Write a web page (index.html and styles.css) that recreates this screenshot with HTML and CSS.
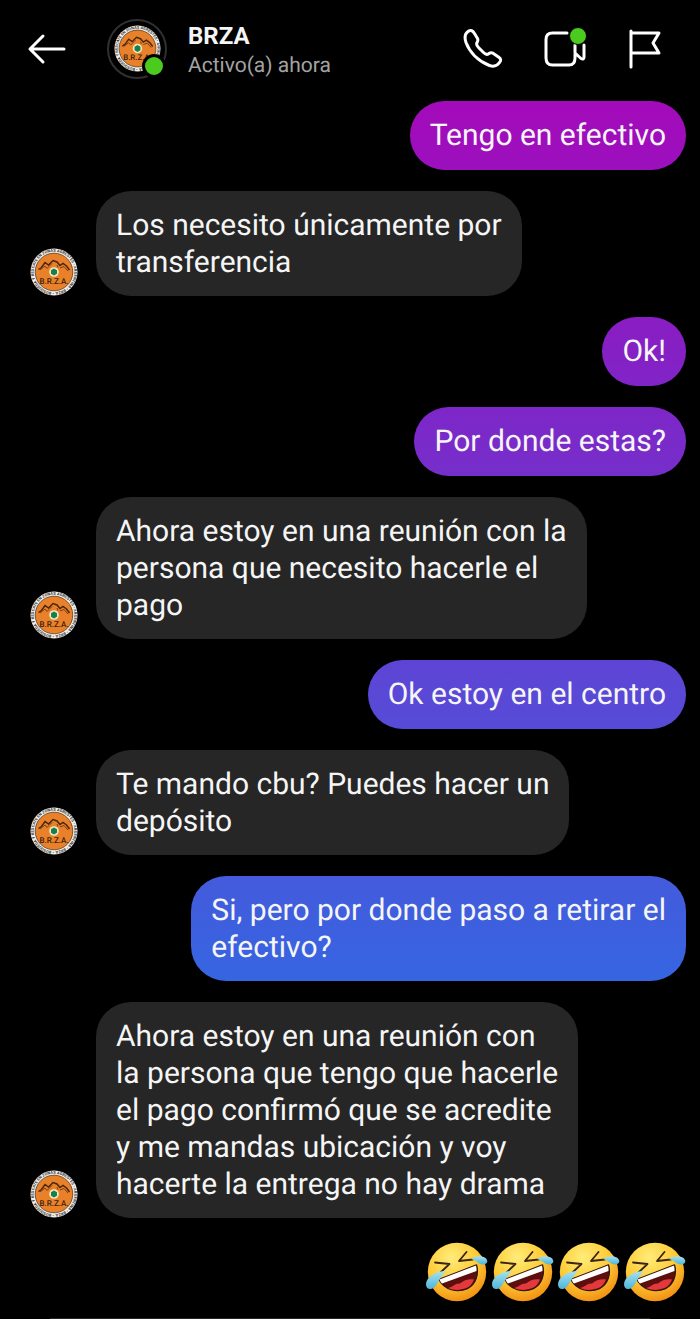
FILE: index.html
```html
<!DOCTYPE html>
<html lang="es">
  <head>
    <meta charset="UTF-8" />
    <meta name="viewport" content="width=device-width, initial-scale=1.0" />
    <title>BRZA | Chat</title>
    <link rel="stylesheet" href="styles.css" />
  </head>

  <body>
    <!-- shared drawings -->
    <svg class="defs" aria-hidden="true">
      <defs>
        <radialGradient id="face" cx="0.4" cy="0.25" r="0.8">
          <stop offset="0" stop-color="#ffec7a" />
          <stop offset="0.55" stop-color="#fecb35" />
          <stop offset="1" stop-color="#f08a10" />
        </radialGradient>
        <linearGradient id="tear" x1="0" y1="0" x2="0" y2="1">
          <stop offset="0" stop-color="#a5e3ee" />
          <stop offset="1" stop-color="#4fb4da" />
        </linearGradient>
        <path id="ring" d="M24 44.2a20.2 20.2 0 1 1 .1 0" />
      </defs>
      <symbol id="rofl" viewBox="0 0 62 60">
        <circle cx="31" cy="30" r="29.200" fill="url(#face)" />
        <path d="M9 20.500l14.500 1.500-9 8.500M40.500 10l-7.500 9 14-1.500" fill="none" stroke="#3b2410" stroke-width="1.800" stroke-linejoin="round" stroke-linecap="round" />
        <path d="M13 37.500L50.500 23c2.500 9-.5 19.500-9 23.500-10 4.500-23.500 1.500-28.500-9z" fill="#5c0f0d" stroke="#33150a" stroke-width="1.400" stroke-linejoin="round" />
        <path d="M22 46c5-1 7-5 12-4.500 4-3.500 9-5 14-4-1.500 4-4 7-7.500 8.600-6 2.400-13 2.400-18.500-.1z" fill="#e3383c" />
        <path d="M13.500 37.500L50 23.500c.5 2 .6 3.500.5 5.500L16 41.500c-1-1-2-2.500-2.500-4z" fill="#fff" />
        <path d="M20 29C10 29 0 35 0 42.500c0 3 2 5 5 4.500C11 46 12 37 20 29z" fill="url(#tear)" />
        <path d="M45 17c5-3.500 11-3.500 14.500-1 3.500 3 1.500 6.500-2.500 6.500-4.500 0-6-4-12-5.500z" fill="url(#tear)" />
      </symbol>
    </svg>
    <svg class="hidden" aria-hidden="true">
      <symbol id="logo" viewBox="0 0 48 48">
        <circle cx="24" cy="24" r="23.5" fill="#f4f1ec" />
        <text class="logo-ring">
          <textPath href="#ring">• BUSQUEDA Y RESCATE EN ZONAS AGRESTES • ARGENTINA • BRZA</textPath>
        </text>
        <circle cx="24" cy="24" r="18.8" fill="#e8812a" stroke="#5b3a20" stroke-width="0.8" />
        <path d="M8.500 21.500l3-2 3.500-5 3.500 2.500 4.500-4.500 4 1.500 3 3.500 3-2 3.500 2.500 3 4" fill="none" stroke="#4a260e" stroke-width="1.500" />
        <path d="M10 22l5-4 2 2.500 5-5M27 17l1 2.500M30 20l4-1.500 4 4.500" fill="none" stroke="#7b3f14" stroke-width="1" />
        <circle cx="24" cy="24" r="4.800" fill="#f3e6c4" />
        <path d="M24 20.500l3 1.700v3.600l-3 1.700-3-1.700v-3.600z" fill="#12824a" />
        <text class="logo-name" x="24" y="36" text-anchor="middle">B.R.Z.A.</text>
      </symbol>
    </svg>

    <header class="topbar">
      <button type="button" class="icon-btn" aria-label="Volver">
        <svg width="40" height="40" viewBox="0 0 40 40">
          <path d="M37 20H3M16 7L3 20l13 13" />
        </svg>
      </button>
      <div class="profile-pic">
        <svg class="profile-logo"><use href="#logo" /></svg>
        <span class="online"></span>
      </div>
      <div class="profile">
        <h1>BRZA</h1>
        <p>Activo(a) ahora</p>
      </div>
      <div class="actions">
        <button type="button" class="icon-btn" aria-label="Llamar">
          <svg width="40" height="40" viewBox="0 0 40 40">
            <path d="M5 2.500C8 .5 10 1.800 11.500 4.500L14.500 9.500C15.500 11.500 14.500 12.500 13.800 14C13.200 15.500 14 17 15.500 18.500L20.500 23.500C22.500 25.500 24 26 25.500 24.800C27.500 23.500 28.500 23.300 30 24.300L35.500 28C38.500 30 38 31.500 36.500 33.500C34 37 30.500 38 26.500 36.500C15 32 6.500 23 3 13.500C1.500 9 1.500 5 5 2.500Z" />
          </svg>
        </button>
        <button type="button" class="icon-btn video" aria-label="Videollamada">
          <svg width="44" height="40" viewBox="0 0 44 40">
            <path d="M24 4H9.500Q3 4 3 10.500V29Q3 36 9.500 36H26Q32 36 32 29V16M32 24L38 29.500Q41 31 41 28V16" />
          </svg>
          <span class="badge"></span>
        </button>
        <button type="button" class="icon-btn" aria-label="Marcar">
          <svg width="36" height="40" viewBox="0 0 36 40">
            <path d="M4 2V38M4 4H32L26 14L32 24H4" />
          </svg>
        </button>
      </div>
    </header>

    <main class="chat">
      <p class="bubble sent">Tengo en efectivo</p>
      <div class="received">
        <svg class="avatar"><use href="#logo" /></svg>
        <p class="bubble">Los necesito únicamente por<br />transferencia</p>
      </div>
      <p class="bubble sent">Ok!</p>
      <p class="bubble sent">Por donde estas?</p>
      <div class="received">
        <svg class="avatar"><use href="#logo" /></svg>
        <p class="bubble">Ahora estoy en una reunión con la<br />persona que necesito hacerle el<br />pago</p>
      </div>
      <p class="bubble sent">Ok estoy en el centro</p>
      <div class="received">
        <svg class="avatar"><use href="#logo" /></svg>
        <p class="bubble">Te mando cbu? Puedes hacer un<br />depósito</p>
      </div>
      <p class="bubble sent">Si, pero por donde paso a retirar el<br />efectivo?</p>
      <div class="received">
        <svg class="avatar"><use href="#logo" /></svg>
        <p class="bubble">Ahora estoy en una reunión con<br />la persona que tengo que hacerle<br />el pago confirmó que se acredite<br />y me mandas ubicación y voy<br />hacerte la entrega no hay drama</p>
      </div>
      <div class="emojis" role="img" aria-label="🤣🤣🤣🤣">
        <svg><use href="#rofl" /></svg>
        <svg><use href="#rofl" /></svg>
        <svg><use href="#rofl" /></svg>
        <svg><use href="#rofl" /></svg>
      </div>
    </main>
    <footer class="composer"></footer>
  </body>
</html>
```
FILE: styles.css
```css
* {
  padding: 0;
  margin: 0;
  box-sizing: border-box;
}

body {
  background-color: #000000;
  color: #f5f5f5;
  font-family: Roboto, "Noto Sans", sans-serif;
  text-rendering: geometricPrecision;
}

.defs {
  position: absolute;
  width: 0;
  height: 0;
}

.hidden {
  display: none;
}

/* header */
.topbar {
  display: flex;
  align-items: center;
  height: 97px;
  padding: 0 37px 0 27px;
}

.icon-btn {
  display: flex;
  border: none;
  background: none;
  cursor: pointer;
}

.icon-btn svg {
  fill: none;
  stroke: #ffffff;
  stroke-width: 3;
  stroke-linecap: round;
  stroke-linejoin: round;
}

.profile-pic {
  position: relative;
  display: flex;
  justify-content: center;
  align-items: center;
  width: 60px;
  height: 60px;
  margin-left: 40px;
  border: 2px solid #303030;
  border-radius: 50%;
}

.profile-logo {
  width: 47px;
  height: 47px;
}

.online {
  position: absolute;
  right: -1px;
  bottom: -1px;
  width: 24px;
  height: 24px;
  border: 3px solid #000000;
  border-radius: 50%;
  background-color: #4ccb1f;
}

.profile {
  flex: 1;
  padding-top: 4px;
  margin-left: 21px;
}

.profile h1 {
  font-size: 24px;
  font-weight: 700;
  line-height: 30px;
}

.profile p {
  color: #a3a3a3;
  font-size: 21px;
  line-height: 30px;
}

.actions {
  display: flex;
  gap: 40px;
}

.video {
  position: relative;
}

.badge {
  position: absolute;
  top: -2px;
  right: 0;
  width: 18px;
  height: 18px;
  border: 1px solid #000000;
  border-radius: 50%;
  background-color: #4ccb1f;
}

/* messages */
.chat {
  display: flex;
  flex-direction: column;
  align-items: flex-start;
  gap: 21px;
  padding: 4px 14px 16px 30px;
}

.received {
  display: flex;
  align-items: flex-end;
  gap: 18px;
}

.avatar {
  flex-shrink: 0;
  width: 48px;
  height: 48px;
}

.bubble {
  min-height: 69px;
  padding: 16px 20px 15px;
  border-radius: 35px;
  background-color: #262626;
  font-size: 30px;
  line-height: 37px;
}

/* the gradient belongs to the window, each bubble shows its part */
.sent {
  align-self: flex-end;
  background: linear-gradient(#a40aba 100px, #8520c5 352px, #5a48d6 694px, #435bdc 880px, #3665e2 980px) fixed;
}

.emojis {
  display: flex;
  align-self: flex-end;
  gap: 4px;
  margin-top: 3px;
}

.emojis svg {
  width: 62px;
  height: 60px;
}

/* top edge of the message box */
.composer {
  margin: 0 50px;
  border-top: 1px solid #262626;
}

.logo-ring {
  fill: #333333;
  font-size: 4px;
  font-weight: 700;
}

.logo-name {
  fill: #3a1d0a;
  font-size: 8px;
  font-weight: 500;
}
```
